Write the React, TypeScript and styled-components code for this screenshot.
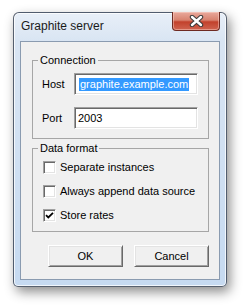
import React from "react";
import styled, { createGlobalStyle } from "styled-components";

const GlobalStyle = createGlobalStyle`
  html, body {
    margin: 0;
    padding: 0;
    background: #ffffff;
  }
  body {
    width: 245px;
    height: 306px;
    overflow: hidden;
    font-family: "Liberation Sans", Arial, sans-serif;
  }
`;

const Stage = styled.div`
  padding: 12px 0 0 13px;
`;

const Window = styled.div`
  /* Aero style frame */
  box-sizing: border-box;
  width: 214px;
  height: 275px;
  display: flex;
  flex-direction: column;
  padding: 0 6px 6px 6px;
  border: 1px solid rgba(40, 50, 65, 0.75);
  border-radius: 6px 6px 5px 5px;
  background: linear-gradient(to bottom, #e8eff8 0, #d9e5f3 28px, #c6daf1 100%);
  box-shadow: inset 0 0 0 1px rgba(255, 255, 255, 0.75),
    3px 5px 12px rgba(0, 0, 0, 0.45);
`;

const TitleBar = styled.div`
  display: flex;
  align-items: flex-start;
  height: 28px;
`;

const Title = styled.div`
  flex: 1;
  padding: 6px 0 0 1px;
  font-size: 12px;
  line-height: 14px;
  color: #1a1a1a;
`;

const CloseButton = styled.div`
  width: 48px;
  height: 19px;
  margin-top: -1px;
  display: flex;
  align-items: center;
  justify-content: center;
  box-sizing: border-box;
  border: 1px solid #6e2a22;
  border-top: none;
  border-radius: 0 0 4px 4px;
  background: linear-gradient(
    to bottom,
    #e9a99c 0,
    #d8826f 45%,
    #c2412c 55%,
    #cf6450 100%
  );
  box-shadow: inset 0 0 0 1px rgba(255, 220, 210, 0.45);
`;

const Client = styled.div`
  flex: 1;
  display: flex;
  flex-direction: column;
  padding: 12px 10px 12px 11px;
  border: 1px solid #8a9bb0;
  background: #f0f0f0;
  font-size: 11px;
  color: #000;
`;

const Group = styled.fieldset<{ $top?: number }>`
  margin: ${(p) => p.$top ?? 0}px 0 0 0;
  padding: 0;
  border: 1px solid #a6a6a6;
  min-width: 0;
`;

const Legend = styled.legend`
  margin-left: 5px;
  padding: 0 2px;
  font-size: 11px;
  line-height: 12px;
`;

const FieldGrid = styled.div`
  display: grid;
  grid-template-columns: 32px 1fr;
  grid-auto-rows: 22px;
  row-gap: 12px;
  align-items: center;
  padding: 7px 10px 9px 9px;
`;

const FieldLabel = styled.span`
  line-height: 13px;
  padding-top: 1px;
`;

const TextBox = styled.div`
  box-sizing: border-box;
  height: 22px;
  display: flex;
  align-items: center;
  padding: 0 3px;
  background: #ffffff;
  border: 1px solid;
  border-color: #a0a0a0 #ffffff #ffffff #a0a0a0;
  box-shadow: inset 1px 1px 0 #696969, inset -1px -1px 0 #e3e3e3;
  line-height: 13px;
  white-space: nowrap;
  overflow: hidden;
`;

const Selected = styled.span`
  background: #3399ff;
  color: #ffffff;
  padding: 0 1px;
  margin-left: 1px;
`;

const CheckList = styled.div`
  display: flex;
  flex-direction: column;
  gap: 11px;
  padding: 7px 10px 9px 10px;
`;

const CheckRow = styled.div`
  display: flex;
  align-items: center;
  gap: 4px;
  height: 13px;
  line-height: 13px;
`;

const Box = styled.span`
  box-sizing: border-box;
  width: 13px;
  height: 13px;
  flex: none;
  display: flex;
  align-items: center;
  justify-content: center;
  background: #ffffff;
  border: 1px solid;
  border-color: #a0a0a0 #ffffff #ffffff #a0a0a0;
  box-shadow: inset 1px 1px 0 #696969, inset -1px -1px 0 #e3e3e3;
`;

const ButtonRow = styled.div`
  display: flex;
  justify-content: flex-end;
  gap: 11px;
  margin-top: 13px;
`;

const Button = styled.div`
  box-sizing: border-box;
  width: 75px;
  height: 22px;
  display: flex;
  align-items: center;
  justify-content: center;
  background: #f0f0f0;
  border: 1px solid;
  border-color: #ffffff #696969 #696969 #ffffff;
  box-shadow: inset 1px 1px 0 #e3e3e3, inset -1px -1px 0 #a0a0a0;
  font-size: 11px;
`;

const Check = ({ checked, label }: { checked?: boolean; label: string }) => (
  <CheckRow>
    <Box>
      {checked && (
        <svg width="9" height="9" viewBox="0 0 9 9">
          <path
            d="M1 4.2 L3.3 6.5 L8 1.8"
            fill="none"
            stroke="#000"
            strokeWidth="1.8"
          />
        </svg>
      )}
    </Box>
    <span>{label}</span>
  </CheckRow>
);

export default function App() {
  return (
    <Stage>
      <GlobalStyle />
      <Window>
        <TitleBar>
          <Title>Graphite server</Title>
          <CloseButton>
            <svg width="15" height="12" viewBox="0 0 15 12">
              <path
                d="M3 2 L12 10 M12 2 L3 10"
                stroke="#3a3a3a"
                strokeWidth="4.4"
                strokeLinecap="round"
              />
              <path
                d="M3 2 L12 10 M12 2 L3 10"
                stroke="#ffffff"
                strokeWidth="2.4"
                strokeLinecap="round"
              />
            </svg>
          </CloseButton>
        </TitleBar>
        <Client>
          <Group>
            <Legend>Connection</Legend>
            <FieldGrid>
              <FieldLabel>Host</FieldLabel>
              <TextBox>
                <Selected>graphite.example.com</Selected>
              </TextBox>
              <FieldLabel>Port</FieldLabel>
              <TextBox>2003</TextBox>
            </FieldGrid>
          </Group>
          <Group $top={3}>
            <Legend>Data format</Legend>
            <CheckList>
              <Check label="Separate instances" />
              <Check label="Always append data source" />
              <Check checked label="Store rates" />
            </CheckList>
          </Group>
          <ButtonRow>
            <Button>OK</Button>
            <Button>Cancel</Button>
          </ButtonRow>
        </Client>
      </Window>
    </Stage>
  );
}
